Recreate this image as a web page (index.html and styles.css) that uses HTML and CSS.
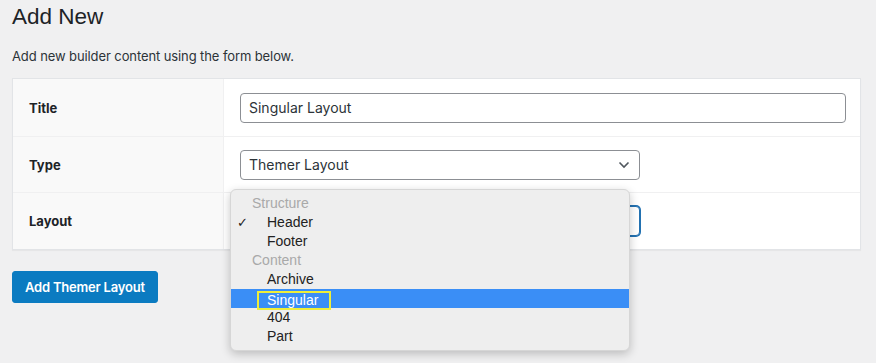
FILE: index.html
```html
<!DOCTYPE html>
<html lang="en">
<head>
<meta charset="utf-8">
<title>Add New</title>
<link rel="stylesheet" href="styles.css">
</head>
<body>
<div class="wrap">
  <h1 class="page-title">Add New</h1>
  <p class="intro">Add new builder content using the form below.</p>
  <div class="form-table">
    <div class="row">
      <div class="label">Title</div>
      <div class="field"><div class="text-input">Singular Layout</div></div>
    </div>
    <div class="row">
      <div class="label">Type</div>
      <div class="field">
        <div class="select">
          <span>Themer Layout</span>
          <svg class="chev" width="12" height="8" viewBox="0 0 12 8"><path d="M1.5 1.5 L6 6 L10.5 1.5" fill="none" stroke="#50575e" stroke-width="1.6"/></svg>
        </div>
      </div>
    </div>
    <div class="row">
      <div class="label">Layout</div>
      <div class="field">
        <div class="select focused">
          <span></span>
          <svg class="chev" width="12" height="8" viewBox="0 0 12 8"><path d="M1.5 1.5 L6 6 L10.5 1.5" fill="none" stroke="#50575e" stroke-width="1.6"/></svg>
        </div>
        <div class="menu">
          <div class="group">Structure</div>
          <div class="option checked"><span class="check">✓</span>Header</div>
          <div class="option">Footer</div>
          <div class="group">Content</div>
          <div class="option">Archive</div>
          <div class="option active"><span class="mark">Singular</span></div>
          <div class="option">404</div>
          <div class="option">Part</div>
        </div>
      </div>
    </div>
  </div>
  <div class="actions"><button class="button-primary">Add Themer Layout</button></div>
</div>
</body>
</html>
```
FILE: styles.css
```css
html, body {
  margin: 0;
  padding: 0;
  background: #f0f0f1;
}
body {
  font-family: Inter, "Liberation Sans", Arial, sans-serif;
  color: #1d2327;
  font-size: 13px;
}
.wrap {
  box-sizing: border-box;
  min-height: 363px;
  padding: 0 15px 0 12px;
}
.page-title {
  font-family: "Liberation Sans", Arial, sans-serif;
  font-size: 22.5px;
  font-weight: 400;
  line-height: 30px;
  margin: 0;
  padding: 2px 0 0;
  color: #1d2327;
}
.intro {
  margin: 15px 0 0;
  font-size: 13px;
  line-height: 18px;
  letter-spacing: -0.1px;
  color: #2c3338;
}
.form-table {
  margin-top: 13px;
  background: #fff;
  border: 1px solid #e2e4e7;
  box-shadow: 0 1px 1px rgba(0,0,0,0.04);
}
.row {
  box-sizing: border-box;
  display: grid;
  grid-template-columns: 211px 1fr;
  border-top: 1px solid #f0f0f1;
}
.row:first-child { border-top: none; }
.row:nth-child(1) { height: 57px; }
.row:nth-child(2) { height: 56px; }
.row:nth-child(3) { height: 57px; }
.label {
  background: #f9f9f9;
  border-right: 1px solid #f0f0f1;
  font-weight: 700;
  font-size: 13px;
  padding-left: 16px;
  display: flex;
  align-items: center;
  color: #1d2327;
}
.field {
  position: relative;
  display: flex;
  align-items: center;
  padding: 0 14px 0 16px;
}
.text-input, .select {
  box-sizing: border-box;
  height: 30px;
  border: 1px solid #8c8f94;
  border-radius: 4px;
  background: #fff;
  font-size: 14px;
  color: #2c3338;
  padding: 0 8px;
  display: flex;
  align-items: center;
}
.text-input { width: 100%; }
.select {
  width: 400px;
  justify-content: space-between;
  padding-right: 9px;
}
.select.focused {
  border-color: #2271b1;
  box-shadow: 0 0 0 1px #2271b1;
}
.menu {
  position: absolute;
  left: 6px;
  top: -4px;
  width: 400px;
  box-sizing: border-box;
  padding: 4px 0;
  background: #eeeeee;
  border: 1px solid #d6d6d6;
  border-radius: 6px;
  box-shadow: 0 3px 10px rgba(0,0,0,0.22);
  font-family: "Liberation Sans", Arial, sans-serif;
  font-size: 14px;
  z-index: 2;
}
.group, .option {
  height: 19px;
  line-height: 19px;
  position: relative;
}
.group {
  color: #a9a9a9;
  padding-left: 21px;
}
.option {
  color: #222;
  padding-left: 36px;
}
.check {
  position: absolute;
  left: 6px;
  top: 0;
  font-size: 13px;
}
.option.active {
  background: #3a8ef6;
  color: #fff;
}
.mark {
  display: inline-block;
  box-sizing: border-box;
  height: 19px;
  line-height: 15px;
  margin: 2px 0 0 -10px;
  padding: 0 11px 0 8px;
  border: 2px solid #eeee3a;
  vertical-align: top;
}
.actions {
  margin-top: 21px;
}
.button-primary {
  font-family: Inter, "Liberation Sans", Arial, sans-serif;
  font-size: 13px;
  font-weight: 600;
  letter-spacing: -0.2px;
  color: #fff;
  background: #0b7bc1;
  border: 1px solid #0b7bc1;
  border-radius: 3px;
  height: 32px;
  padding: 0 12px;
  cursor: pointer;
}
```
